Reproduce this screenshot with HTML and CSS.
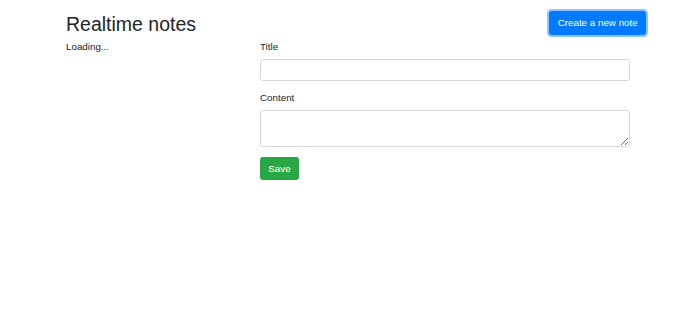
FILE: index.html
```html
<!DOCTYPE html>
<html lang="en">
<head>
<meta charset="utf-8">
<title>Realtime notes</title>
<link rel="stylesheet" href="styles.css">
</head>
<body>
  <div class="topbar">
    <h2 class="title">Realtime notes</h2>
    <button class="btn btn-primary" type="button">Create a new note</button>
  </div>
  <div class="main">
    <div class="list">Loading...</div>
    <form class="editor">
      <div class="form-group">
        <label class="label" for="title">Title</label>
        <input class="control" id="title" type="text">
      </div>
      <div class="form-group">
        <label class="label" for="content">Content</label>
        <textarea class="control control-area" id="content"></textarea>
      </div>
      <button class="btn btn-success" type="button">Save</button>
    </form>
  </div>
</body>
</html>
```

FILE: styles.css
```css
html, body {
  margin: 0;
  padding: 0;
  background: #fff;
}

body {
  font-family: "Liberation Sans", Arial, sans-serif;
  font-size: 9.8px;
  line-height: 1.5;
  color: #212529;
}

.topbar {
  display: flex;
  justify-content: space-between;
  align-items: flex-start;
  padding: 11px 54px 0 66px;
  margin-bottom: 4px;
}

.title {
  margin: 1.5px 0 0;
  font-size: 19.5px;
  font-weight: 400;
  line-height: 1.2;
}

.btn {
  display: inline-block;
  box-sizing: border-box;
  height: 24px;
  padding: 0 7.3px;
  font-family: inherit;
  font-size: 9.8px;
  line-height: 22px;
  border: 1px solid transparent;
  border-radius: 2.5px;
  color: #fff;
  cursor: pointer;
}

.btn-primary {
  background: #007bff;
  border-color: #007bff;
  box-shadow: 0 0 0 2px rgba(0, 123, 255, 0.45);
}

.btn-success {
  height: 23px;
  line-height: 21px;
  background: #28a745;
  border-color: #28a745;
}

.main {
  display: grid;
  grid-template-columns: 194px 370px;
  padding-left: 66px;
}

.editor {
  margin: 0;
}

.form-group {
  margin-bottom: 9.8px;
}

.label {
  display: block;
  margin-bottom: 4.4px;
}

.control {
  display: block;
  box-sizing: border-box;
  width: 100%;
  height: 22px;
  margin: 0;
  padding: 3.7px 7.3px;
  font-family: inherit;
  font-size: 9.8px;
  color: #495057;
  background: #fff;
  border: 1px solid #d5d9de;
  border-radius: 2.5px;
}

.control-area {
  height: 37px;
  resize: vertical;
}
```
